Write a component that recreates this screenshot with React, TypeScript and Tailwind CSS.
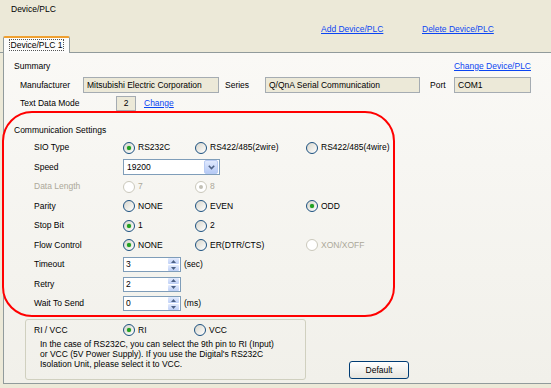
import React from "react";

const FONT = { fontFamily: '"Liberation Sans", Arial, sans-serif' };

function Radio({ checked, disabled, label }: { checked?: boolean; disabled?: boolean; label: string }) {
  return (
    <span className="flex items-center gap-[3px]">
      <span
        className={
          disabled
            ? "flex h-[12px] w-[12px] items-center justify-center rounded-full border border-[#CAC8BB] bg-white"
            : "flex h-[12px] w-[12px] items-center justify-center rounded-full border border-[#1C5180] bg-gradient-to-br from-[#D8D6CC] to-white"
        }
      >
        {checked && (
          <span
            className={
              disabled
                ? "h-[4px] w-[4px] rounded-full bg-[#C2C0B5]"
                : "h-[4px] w-[4px] rounded-full bg-[#21A121] shadow-[0_0_1px_#2A9A2A]"
            }
          />
        )}
      </span>
      <span className={disabled ? "text-[#ACA899]" : "text-black"}>{label}</span>
    </span>
  );
}

function Spin({ value, unit }: { value: string; unit?: string }) {
  return (
    <div className="flex items-center">
      <div className="flex h-[15px] w-[58px] items-center border border-[#7F9DB9] bg-white">
        <span className="flex-1 pl-[2px] leading-[11px]">{value}</span>
        <div className="mr-[1px] flex h-[13px] w-[11px] flex-col gap-px">
          <div className="flex flex-1 items-center justify-center rounded-[1px] bg-gradient-to-b from-[#E3EBFD] to-[#BFD0F6]">
            <svg width="5" height="3" viewBox="0 0 5 3">
              <path d="M0 3 L2.5 0 L5 3 Z" fill="#4D6185" />
            </svg>
          </div>
          <div className="flex flex-1 items-center justify-center rounded-[1px] bg-gradient-to-b from-[#E3EBFD] to-[#BFD0F6]">
            <svg width="5" height="3" viewBox="0 0 5 3">
              <path d="M0 0 L2.5 3 L5 0 Z" fill="#4D6185" />
            </svg>
          </div>
        </div>
      </div>
      {unit && <span className="ml-[3px]">{unit}</span>}
    </div>
  );
}

function Row({ label, disabled, children }: { label: string; disabled?: boolean; children: React.ReactNode }) {
  return (
    <div className="flex h-[19.5px] items-center pl-[30px]">
      <span className={"w-[89px] " + (disabled ? "text-[#ACA899]" : "text-black")}>{label}</span>
      {children}
    </div>
  );
}

function Link({ children }: { children: React.ReactNode }) {
  return <span className="text-[#0B45F2] underline underline-offset-1">{children}</span>;
}

export default function App() {
  return (
    <div
      style={FONT}
      className="h-[388px] w-[551px] overflow-hidden bg-[#ECE9D8] text-[8.5px] leading-[11px] text-black"
    >
      {/* header */}
      <div className="h-[36px]">
        <div className="pl-[11px] pt-[4px]">Device/PLC</div>
        <div className="mt-[9px] flex pl-[321px]">
          <div className="w-[101px]">
            <Link>Add Device/PLC</Link>
          </div>
          <Link>Delete Device/PLC</Link>
        </div>
      </div>

      {/* tab strip */}
      <div className="flex h-[17px]">
        <div className="w-[3px] border-b border-[#919B9C]" />
        <div className="flex w-[67px] items-start justify-center rounded-t-[2px] border-x border-t-[2px] border-x-[#919B9C] border-t-[#F0A030] bg-[#FCFCFB] pt-[1px]">
          <span className="border border-dotted border-[#555] px-[1px] leading-[10px]">Device/PLC 1</span>
        </div>
        <div className="flex-1 border-b border-[#919B9C]" />
      </div>

      {/* panel */}
      <div className="ml-[3px] h-[331px] border-b border-l border-[#919B9C] bg-gradient-to-b from-[#FAF9F6] to-[#F1F0EA]">
        <div className="flex h-[16px] items-center justify-between pl-[10px] pr-[20px] pt-[5px] box-content">
          <span>Summary</span>
          <Link>Change Device/PLC</Link>
        </div>

        <div className="mt-[3px] flex h-[16px] items-center pl-[16px]">
          <span className="w-[63px]">Manufacturer</span>
          <div className="flex h-[16px] w-[136px] items-center border border-[#A5ACB2] bg-[#ECE9D8] pl-[3px]">
            Mitsubishi Electric Corporation
          </div>
          <span className="ml-[6px] w-[40px]">Series</span>
          <div className="flex h-[16px] w-[155px] items-center border border-[#A5ACB2] bg-[#ECE9D8] pl-[3px]">
            Q/QnA Serial Communication
          </div>
          <span className="ml-[10px] w-[24px]">Port</span>
          <div className="flex h-[16px] w-[77px] items-center border border-[#A5ACB2] bg-[#ECE9D8] pl-[3px]">
            COM1
          </div>
        </div>

        <div className="mt-[3px] flex h-[15px] items-center pl-[16px]">
          <span className="w-[96px]">Text Data Mode</span>
          <div className="flex h-[15px] w-[20px] items-center justify-center border border-[#A5ACB2] bg-[#ECE9D8]">
            2
          </div>
          <span className="ml-[8px]">
            <Link>Change</Link>
          </span>
        </div>

        {/* communication settings (highlighted) */}
        <div className="-ml-[2px] h-[206px] w-[393px] rounded-[30px] border-2 border-[#FF0000] pt-[11px]">
          <div className="h-[12px] pl-[10px] leading-[12px]">Communication Settings</div>
          <div className="mt-[2px]">
            <Row label="SIO Type">
              <div className="w-[72px]">
                <Radio checked label="RS232C" />
              </div>
              <div className="w-[111px]">
                <Radio label="RS422/485(2wire)" />
              </div>
              <Radio label="RS422/485(4wire)" />
            </Row>
            <Row label="Speed">
              <div className="flex h-[16px] w-[97px] items-center border border-[#7F9DB9] bg-white">
                <span className="flex-1 pl-[3px]">19200</span>
                <div className="mr-[1px] flex h-[14px] w-[14px] items-center justify-center rounded-[2px] border border-[#B9CBF3] bg-gradient-to-b from-[#E0E9FE] to-[#B6CAF5]">
                  <svg width="7" height="5" viewBox="0 0 7 5">
                    <path d="M0.8 0.8 L3.5 3.6 L6.2 0.8" fill="none" stroke="#4D6185" strokeWidth="1.6" />
                  </svg>
                </div>
              </div>
            </Row>
            <Row label="Data Length" disabled>
              <div className="w-[72px]">
                <Radio disabled label="7" />
              </div>
              <Radio disabled checked label="8" />
            </Row>
            <Row label="Parity">
              <div className="w-[72px]">
                <Radio label="NONE" />
              </div>
              <div className="w-[111px]">
                <Radio label="EVEN" />
              </div>
              <Radio checked label="ODD" />
            </Row>
            <Row label="Stop Bit">
              <div className="w-[72px]">
                <Radio checked label="1" />
              </div>
              <Radio label="2" />
            </Row>
            <Row label="Flow Control">
              <div className="w-[72px]">
                <Radio checked label="NONE" />
              </div>
              <div className="w-[111px]">
                <Radio label="ER(DTR/CTS)" />
              </div>
              <Radio disabled label="XON/XOFF" />
            </Row>
            <Row label="Timeout">
              <Spin value="3" unit="(sec)" />
            </Row>
            <Row label="Retry">
              <Spin value="2" />
            </Row>
            <Row label="Wait To Send">
              <Spin value="0" unit="(ms)" />
            </Row>
          </div>
        </div>

        {/* RI / VCC */}
        <div className="mt-[2px] flex items-end">
          <div className="ml-[21px] h-[61px] w-[281px] rounded-[3px] border border-[#D0D0BF]">
            <div className="mt-[3px] flex h-[14px] items-center pl-[8px]">
              <span className="w-[89px]">RI / VCC</span>
              <div className="w-[71px]">
                <Radio checked label="RI" />
              </div>
              <Radio label="VCC" />
            </div>
            <p className="mt-[2px] pl-[14px] leading-[10px]">
              In the case of RS232C, you can select the 9th pin to RI (Input)
              <br />
              or VCC (5V Power Supply). If you use the Digital's RS232C
              <br />
              Isolation Unit, please select it to VCC.
            </p>
          </div>
          <button className="mb-[1px] ml-[43px] flex h-[18px] w-[60px] items-center justify-center rounded-[3px] border border-[#003C74] bg-gradient-to-b from-white to-[#E6E5DE] text-black">
            Default
          </button>
        </div>
      </div>
    </div>
  );
}
